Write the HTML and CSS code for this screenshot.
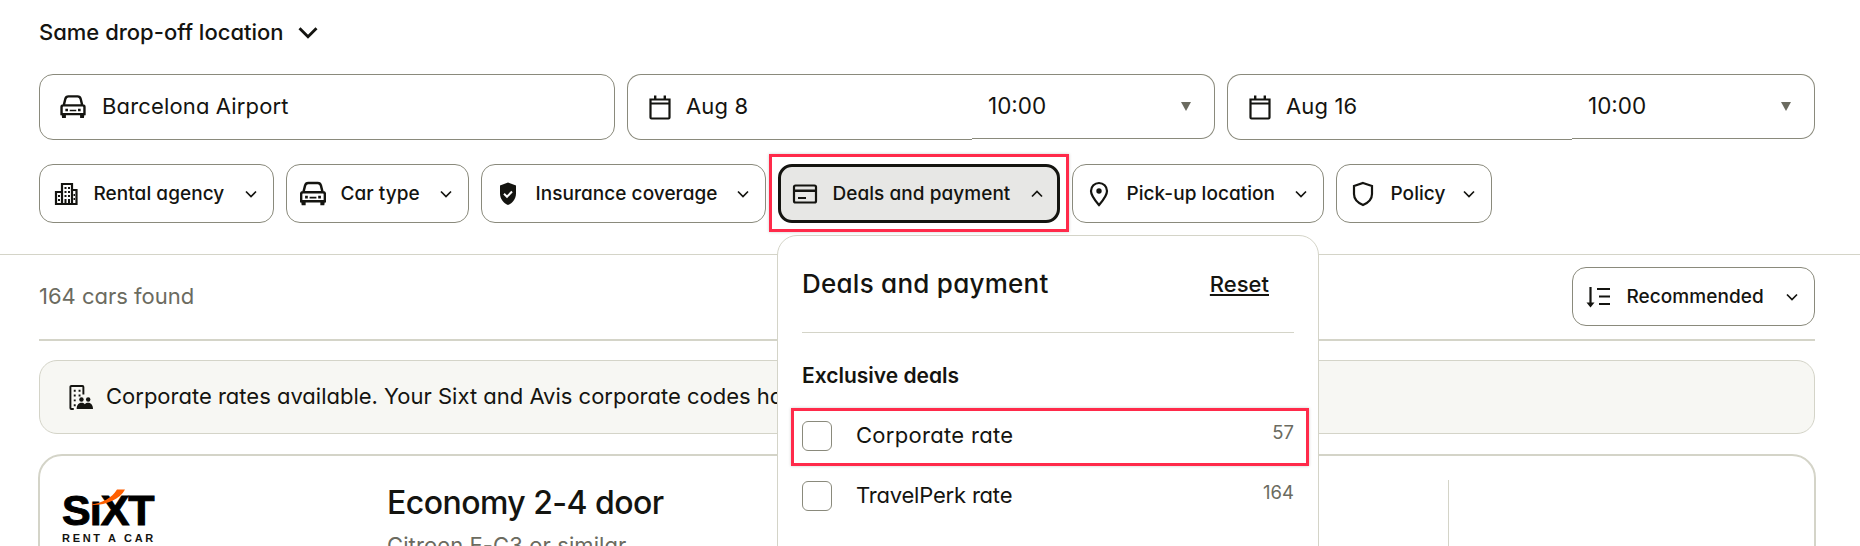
FILE: index.html
```html
<!DOCTYPE html>
<html lang="en">
<head>
<meta charset="utf-8">
<title>Car rental results</title>
<link rel="stylesheet" href="styles.css">
</head>
<body>
<svg class="defs" width="0" height="0" aria-hidden="true">
  <symbol id="car" viewBox="1.500 1.500 23 22"><path d="M4.500 11 6 5a3 3 0 0 1 3-2.200h8a3 3 0 0 1 3 2.200l1.500 6M2.500 12.500a1.500 1.500 0 0 1 1.500-1.500h18a1.500 1.500 0 0 1 1.500 1.500V19h-21z" fill="none" stroke="currentColor" stroke-width="2.200"/><path d="M2.500 19h4v3.500h-3.500zM19.500 19h4l-.5 3.500h-3.500zM6 14h2.400v2.400H6zM17.600 14H20v2.400h-2.400zM10 15h6v1.400h-6z" fill="currentColor"/></symbol>
  <symbol id="chev" viewBox="0 0 14 10"><path d="M2 2.500 7 7.500l5-5" fill="none" stroke="currentColor" stroke-width="1.700"/></symbol>
  <symbol id="cal" viewBox="0 0 24 26"><path d="M2.500 5.500h19v18a1 1 0 0 1-1 1h-17a1 1 0 0 1-1-1zM2.500 9.500h19" fill="none" stroke="currentColor" stroke-width="2.200"/><path d="M6 1.500h2.400v4H6zM15.600 1.500H18v4h-2.400z" fill="currentColor"/></symbol>
</svg>

<div class="page">
  <header class="search">
    <div class="dropoff">Same drop-off location
      <svg class="dropoff-chev"><use href="#chev"/></svg>
    </div>

    <div class="fields">
      <div class="field field-place">
        <svg class="icon-car"><use href="#car"/></svg>
        <span>Barcelona Airport</span>
      </div>
      <div class="field-group">
        <div class="date-part"><svg class="icon-cal"><use href="#cal"/></svg><span>Aug 8</span></div>
        <div class="time-part"><span>10:00</span><i class="tri"></i></div>
      </div>
      <div class="field-group">
        <div class="date-part"><svg class="icon-cal"><use href="#cal"/></svg><span>Aug 16</span></div>
        <div class="time-part"><span>10:00</span><i class="tri"></i></div>
      </div>
    </div>

    <div class="filters">
      <button class="filter w-agency">
        <svg class="icon" viewBox="0 0 26 26"><path d="M9 3h10v20H9zM3 11h6v12H3zM19 9h4.500v14H19z" fill="none" stroke="currentColor" stroke-width="2.200"/><path d="M11.500 6h2v2h-2zM15 6h2v2h-2zM11.500 10h2v2h-2zM15 10h2v2h-2zM11.500 14h2v2h-2zM15 14h2v2h-2zM11.500 18h2v4h-2zM15 18h2v4h-2zM5 14h2v2H5zM5 18h2v2H5zM20.500 13h1.500v2h-1.500zM20.500 17h1.500v2h-1.500z" fill="currentColor"/></svg>
        <span>Rental agency</span>
        <svg class="chev"><use href="#chev"/></svg>
      </button>
      <button class="filter w-type">
        <svg class="icon"><use href="#car"/></svg>
        <span>Car type</span>
        <svg class="chev"><use href="#chev"/></svg>
      </button>
      <button class="filter w-ins">
        <svg class="icon" viewBox="0 0 26 26"><path d="M13 1.500 21 4.500v8c0 5.500-3.500 9.500-8 11.500-4.500-2-8-6-8-11.500v-8z" fill="currentColor"/><path d="m9 12.800 3 3 5-5.300" fill="none" stroke="#fff" stroke-width="2"/></svg>
        <span>Insurance coverage</span>
        <svg class="chev"><use href="#chev"/></svg>
      </button>
      <div class="marked">
        <button class="filter filter-open w-deals">
          <svg class="icon" viewBox="0 0 26 26"><path d="M2 6a1.500 1.500 0 0 1 1.500-1.500h19A1.500 1.500 0 0 1 24 6v14a1.500 1.500 0 0 1-1.500 1.500h-19A1.500 1.500 0 0 1 2 20z" fill="none" stroke="currentColor" stroke-width="2.200"/><path d="M2 8.500h22v2.500H2zM6 16h8v2H6z" fill="currentColor"/></svg>
          <span>Deals and payment</span>
          <svg class="chev chev-up"><use href="#chev"/></svg>
        </button>
      </div>
      <button class="filter w-pick">
        <svg class="icon" viewBox="0 0 26 26"><path d="M13 2a8 8 0 0 1 8 8c0 5-4.500 10-8 14-3.500-4-8-9-8-14a8 8 0 0 1 8-8z" fill="none" stroke="currentColor" stroke-width="2.200"/><circle cx="13" cy="10" r="2.700" fill="currentColor"/></svg>
        <span>Pick-up location</span>
        <svg class="chev"><use href="#chev"/></svg>
      </button>
      <button class="filter w-policy">
        <svg class="icon" viewBox="0 0 26 26"><path d="M13 2 22 5v8c0 5-3.800 8.800-9 11-5.200-2.200-9-6-9-11V5z" fill="none" stroke="currentColor" stroke-width="2.200"/></svg>
        <span>Policy</span>
        <svg class="chev"><use href="#chev"/></svg>
      </button>
    </div>
  </header>

  <main class="results">
    <div class="toolbar">
      <span class="found">164 cars found</span>
      <button class="filter w-sort">
        <svg class="icon" viewBox="0 0 26 26"><path d="M4.500 3v17" fill="none" stroke="currentColor" stroke-width="2.200"/><path d="M.5 18.500h8l-4 5z" fill="currentColor"/><path d="M11 5h13M13 12.500h11M13 20h11" fill="none" stroke="currentColor" stroke-width="2.200"/></svg>
        <span>Recommended</span>
        <svg class="chev"><use href="#chev"/></svg>
      </button>
    </div>

    <div class="banner">
      <svg class="banner-icon" viewBox="0 0 26 28"><path d="M15 2H3.500a1 1 0 0 0-1 1v22a1 1 0 0 0 1 1H6M15 2a1 1 0 0 1 1 1v8" fill="none" stroke="currentColor" stroke-width="2"/><path d="M6 6h2v2H6zM11 6h2v2h-2zM6 11h2v2H6zM11 11h2v2h-2zM6 16h2v2H6zM6 21h2v2H6z" fill="currentColor"/><circle cx="14" cy="16" r="2.300" fill="currentColor"/><circle cx="21" cy="16" r="2.300" fill="currentColor"/><path d="M9 26c0-5 3-6.500 5-6.500 1.500 0 2.500.5 3.500 1.500 1-1 2-1.500 3.500-1.500 2 0 5 1.500 5 6.500z" fill="currentColor"/></svg>
      <span>Corporate rates available. Your Sixt and Avis corporate codes have been applied.</span>
    </div>

    <article class="card">
      <div class="logo">
        <div class="logo-mark">SıXT<svg class="swoosh" viewBox="0 0 34 16"><path d="M.5 15.500C11 14 21 9 26 .5h8C29 10 16 16 2 16z" fill="#ff5f00"/></svg></div>
        <div class="logo-sub">RENT A CAR</div>
      </div>
      <div class="car-info">
        <h2>Economy 2-4 door</h2>
        <p>Citroen E-C3 or similar</p>
      </div>
      <div class="card-divider"></div>
    </article>
  </main>

  <aside class="popover">
    <div class="pop-head">
      <h3>Deals and payment</h3>
      <a class="reset">Reset</a>
    </div>
    <h4>Exclusive deals</h4>
    <label class="row row-marked">
      <span class="box"></span>
      <span class="row-label">Corporate rate</span>
      <span class="count">57</span>
    </label>
    <label class="row">
      <span class="box"></span>
      <span class="row-label row-label-tight">TravelPerk rate</span>
      <span class="count">164</span>
    </label>
  </aside>
</div>
</body>
</html>
```

FILE: styles.css
```css
* { box-sizing: border-box; }
html, body { margin: 0; padding: 0; background: #fff; }
body {
  color: #141410;
  font-family: Inter, "Liberation Sans", sans-serif;
  font-feature-settings: "cv11";
  overflow: hidden;
}
.defs { position: absolute; }
.page { position: relative; height: 546px; overflow: hidden; }

.search {
  height: 255px;
  padding: 12px 45px 0 39px;
  border-bottom: 1px solid #d4d4c8;
}
.dropoff {
  display: flex;
  align-items: center;
  height: 40px;
  font-size: 22px;
  font-weight: 500;
}
.dropoff-chev { width: 24px; height: 17px; margin-left: 12px; }

.fields { display: flex; gap: 12px; margin-top: 22px; font-size: 22px; letter-spacing: 0.15px; }
.field {
  display: flex;
  align-items: center;
  width: 576px;
  height: 66px;
  padding: 0 0 2px 20px;
  border: 1px solid #8a8a7c;
  border-radius: 14px;
}
.icon-car { width: 26px; height: 24px; margin: 2px 16px 0 0; }
.field-group { display: flex; width: 588px; }
.date-part {
  display: flex;
  align-items: center;
  width: 345px;
  height: 66px;
  padding: 0 0 2px 20px;
  border: 1px solid #8a8a7c;
  border-right: 0;
  border-radius: 14px 0 0 14px;
}
.icon-cal { width: 24px; height: 26px; margin: 2px 14px 0 0; }
.time-part {
  display: flex;
  align-items: center;
  justify-content: space-between;
  width: 243px;
  height: 65px;
  padding: 0 23px 3px 16px;
  border: 1px solid #8a8a7c;
  border-left: 0;
  border-radius: 0 14px 14px 0;
  font-size: 22.500px;
  letter-spacing: 0;
}
.tri {
  width: 0;
  height: 0;
  border-left: 5.500px solid transparent;
  border-right: 5.500px solid transparent;
  border-top: 9px solid #6b6b60;
  margin-top: 3px;
}

.filters { display: flex; gap: 12px; margin-top: 24px; }
.filter {
  display: flex;
  align-items: center;
  gap: 14.500px;
  height: 59px;
  padding: 0 15px 0 13px;
  background: #fff;
  border: 1px solid #8a8a7c;
  border-radius: 14px;
  color: inherit;
  font: inherit;
  font-feature-settings: inherit;
  font-size: 19px;
  font-weight: 500;
  letter-spacing: 0.05px;
  white-space: nowrap;
}
.icon { width: 26px; height: 26px; flex: none; }
.chev { width: 14px; height: 10px; flex: none; margin-left: auto; }
.chev-up { transform: rotate(180deg); }
.w-agency { width: 235px; }
.w-type { width: 183px; }
.w-ins { width: 285px; }
.w-deals { width: 282px; }
.w-pick { width: 252px; }
.w-policy { width: 156px; }
.w-sort { width: 243px; }
.filter-open { background: #e7e7e5; border: 3px solid #141410; padding: 0 13px 0 11px; }
.marked { position: relative; display: flex; }
.marked::after {
  content: "";
  position: absolute;
  inset: -10px -9px -9px -9px;
  border: 3px solid #ff2a4a;
  box-shadow: 0 0 3px rgba(0, 0, 0, .2);
  pointer-events: none;
}

.results { padding: 0 45px 0 39px; }
.toolbar {
  display: flex;
  align-items: center;
  justify-content: space-between;
  padding: 12px 0 13px;
  border-bottom: 2px solid #d4d4c8;
}
.found { font-size: 22px; color: #6b6b60; margin-top: -2px; }

.banner {
  display: flex;
  align-items: center;
  height: 74px;
  margin-top: 19px;
  padding: 0 0 2px 28px;
  background: #f7f7f3;
  border: 1px solid #d4d4c8;
  border-radius: 18px;
  font-size: 22px;
  white-space: nowrap;
}
.banner-icon { width: 25px; height: 27px; margin: 2px 13px 0 0; }

.card {
  position: relative;
  display: flex;
  height: 200px;
  margin: 20px -1px 0;
  border: 2px solid #d4d4c8;
  border-radius: 24px;
}
.logo { width: 347px; padding: 33px 0 0 22px; }
.logo-mark {
  position: relative;
  width: 94px;
  height: 43px;
  font-family: "Liberation Sans", sans-serif;
  font-feature-settings: normal;
  font-size: 43px;
  font-weight: 700;
  line-height: 43px;
  letter-spacing: -1px;
  color: #000;
  -webkit-text-stroke: 1px #000;
  white-space: nowrap;
}
.swoosh { position: absolute; left: 29px; top: 0; width: 34px; height: 16px; }
.logo-sub {
  font-family: "Liberation Sans", sans-serif;
  font-feature-settings: normal;
  font-size: 11px;
  font-weight: 700;
  line-height: 13px;
  letter-spacing: 2.700px;
  white-space: nowrap;
}
.car-info h2 { margin: 27px 0 0; font-size: 32px; font-weight: 500; letter-spacing: -0.55px; line-height: 40px; }
.car-info p { margin: 8px 0 0; font-size: 22px; color: #6b6b60; letter-spacing: 0.1px; line-height: 28px; }
.card-divider { position: absolute; left: 1408px; top: 24px; bottom: 0; border-left: 1px solid #d4d4c8; }

.popover {
  position: absolute;
  left: 777px;
  top: 235px;
  width: 542px;
  height: 400px;
  padding: 32px 24px 0;
  background: #fff;
  border: 1px solid #d4d4c8;
  border-radius: 20px;
}
.pop-head {
  display: flex;
  align-items: center;
  justify-content: space-between;
  height: 65px;
  padding: 0 25px 33px 0;
  border-bottom: 1px solid #d4d4c8;
}
.pop-head h3 { margin: 0; font-size: 26px; font-weight: 500; letter-spacing: 0.25px; }
.reset { font-size: 22px; font-weight: 500; text-decoration: underline; }
.popover h4 { margin: 31px 0 33px; font-size: 21px; font-weight: 600; line-height: 24px; }
.row { position: relative; display: flex; align-items: center; height: 30px; margin-bottom: 30px; font-size: 22px; letter-spacing: 0.3px; }
.row-marked::after {
  content: "";
  position: absolute;
  inset: -13px -15px -15px -11px;
  border: 3px solid #ff2a4a;
  box-shadow: 0 0 3px rgba(0, 0, 0, .2);
}
.box { width: 30px; height: 30px; border: 1px solid #8a8a7c; border-radius: 6px; margin-right: 24px; }
.row-label { flex: 1; margin-top: -3px; }
.row-label-tight { letter-spacing: -0.2px; }
.count { font-size: 18.500px; color: #6b6b60; margin-top: -8px; letter-spacing: 0; }
```
